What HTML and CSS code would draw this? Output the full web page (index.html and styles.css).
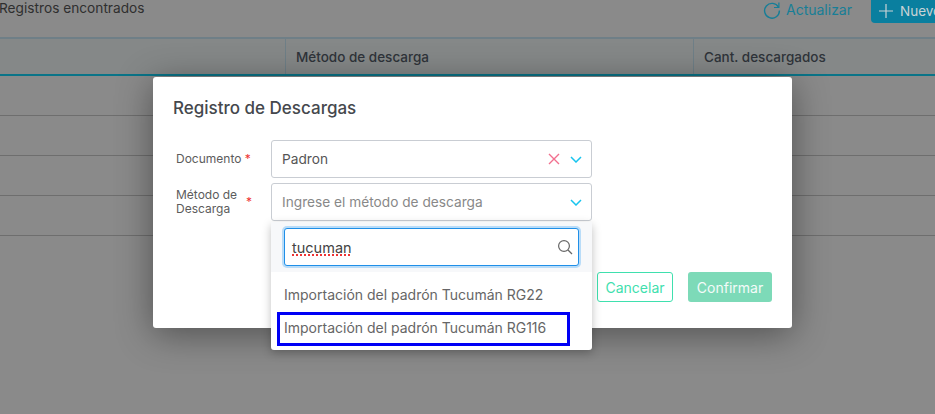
FILE: index.html
```html
<!DOCTYPE html>
<html lang="es">
<head>
<meta charset="utf-8">
<title>Registro de Descargas</title>
<link rel="stylesheet" href="styles.css">
</head>
<body>
<div class="page">
  <div class="toolbar">
    <span class="found">Registros encontrados</span>
    <div class="actions">
      <span class="refresh">
        <svg width="18" height="18" viewBox="0 0 18 18" fill="none" stroke="#177e97" stroke-width="1.4"><path d="M15.5 6.2A7.4 7.4 0 1 0 16.4 9.6"/><path d="M15.9 1.6v4.9h-4.9" stroke-width="1.2"/></svg>
        Actualizar
      </span>
      <span class="new">
        <svg width="14" height="14" viewBox="0 0 14 14" stroke="#c9d3d6" stroke-width="1.2"><path d="M7 0v14M0 7h14"/></svg>
        Nuevo
      </span>
    </div>
  </div>
  <div class="thead">
    <div class="th c1"></div>
    <div class="th c2">Método de descarga</div>
    <div class="th c3">Cant. descargados</div>
  </div>
  <div class="row"></div>
  <div class="row"></div>
  <div class="row"></div>
  <div class="row"></div>
</div>

<div class="modal">
  <h2 class="title">Registro de Descargas</h2>
  <div class="field">
    <label class="lab">Documento <i>*</i></label>
    <div class="select">
      <span class="value">Padron</span>
      <svg class="x" width="12" height="12" viewBox="0 0 12 12" stroke="#f2708f" stroke-width="1.4"><path d="M1 1l10 10M11 1L1 11"/></svg>
      <svg class="chev" width="12" height="7" viewBox="0 0 12 7" fill="none" stroke="#18c4ee" stroke-width="1.5"><path d="M1 1l5 5 5-5"/></svg>
    </div>
  </div>
  <div class="field">
    <label class="lab two">Método de Descarga <i>*</i></label>
    <div class="select">
      <span class="value ph">Ingrese el método de descarga</span>
      <svg class="chev" width="12" height="7" viewBox="0 0 12 7" fill="none" stroke="#18c4ee" stroke-width="1.5"><path d="M1 1l5 5 5-5"/></svg>
    </div>
  </div>
  <div class="buttons">
    <span class="btn cancel">Cancelar</span>
    <span class="btn confirm">Confirmar</span>
  </div>
</div>

<div class="dropdown">
  <div class="searchwrap">
    <div class="search">
      <span class="typed">tucuman</span>
      <svg width="16" height="16" viewBox="0 0 16 16" fill="none" stroke="#666" stroke-width="1.2"><circle cx="7" cy="7" r="5.4"/><path d="M11 11l4 4"/></svg>
    </div>
  </div>
  <div class="opts">
    <div class="opt">Importación del padrón Tucumán RG22</div>
    <div class="opt">Importación del padrón Tucumán RG116</div>
  </div>
</div>
<div class="highlight"></div>
</body>
</html>
```
FILE: styles.css
```css
* { box-sizing: border-box; }
html, body { margin: 0; height: 100%; overflow: hidden; }
body { background: #8a8a8a; font-family: Inter, "Liberation Sans", sans-serif; color: #333; width: 935px; height: 414px; position: relative; }
.page { width: 935px; }
.toolbar { height: 37px; display: flex; justify-content: space-between; align-items: flex-start; }
.found { font-size: 13.7px; color: #2f2f2f; margin-left: -1px; line-height: 17px; }
.actions { display: flex; gap: 19px; margin-right: -28px; }
.refresh { display: flex; align-items: center; gap: 5px; font-size: 14px; color: #177e97; height: 19px; }
.new { display: flex; align-items: center; gap: 7px; width: 92px; height: 24px; margin-top: -1px; padding-left: 8px; background: #0a7f9f; border-radius: 0 0 0 4px; color: #c9d3d6; font-size: 13.5px; }
.thead { display: flex; height: 39px; border-top: 2px solid #6f7f87; border-bottom: 2px solid #0a7488; background: #858888; }
.th { height: 100%; font-size: 13.5px; color: #2f343a; padding: 0 10px; display: flex; align-items: center; font-weight: 500; }
.c1 { width: 285px; }
.c2 { width: 408px; border-left: 1px solid #6f7f87; }
.c3 { flex: 1; border-left: 1px solid #6f7f87; }
.row { height: 40px; border-bottom: 1px solid #6e6e6e; }
.modal { position: absolute; left: 153px; top: 77px; width: 639px; height: 251px; background: #fff; border-radius: 3px; box-shadow: 0 6px 36px rgba(0,0,0,.42); padding: 21px 20px 0; }
.title { margin: 0 0 22px; font-size: 17px; font-weight: 450; color: #45484d; line-height: 20px; }
.field { display: flex; align-items: center; margin-bottom: 5px; }
.lab { width: 98px; padding-left: 3px; font-size: 12px; line-height: 14px; color: #5c5c5c; }
.lab.two { padding-right: 26px; position: relative; }
.lab.two i { position: absolute; left: 73px; top: 7px; }
.lab i { color: #e33; font-style: normal; }
.select { width: 321px; height: 38px; border: 1px solid #c9cdd3; border-radius: 3px; display: flex; align-items: center; padding: 0 9px 0 10px; }
.value { flex: 1; font-size: 13.7px; color: #555; }
.value.ph { color: #888; }
.x { margin-right: 10px; }
.buttons { position: absolute; right: 20px; top: 195px; display: flex; gap: 15px; }
.btn { display: flex; align-items: center; justify-content: center; height: 30px; border-radius: 3px; font-size: 14px; }
.cancel { width: 76px; border: 1px solid #3fe0ae; color: #3fe0ae; }
.confirm { width: 84px; background: #7ddab8; color: #f4fbf8; }
.dropdown { position: absolute; left: 271px; top: 222px; width: 321px; height: 128px; background: #fff; border-radius: 3px; box-shadow: 0 3px 10px rgba(0,0,0,.25); }
.searchwrap { background: #f7f8fa; height: 50px; padding: 6px 13px 0; }
.search { height: 38px; border: 1.5px solid #1f8fe8; border-radius: 3px; box-shadow: 0 0 0 2px #b9dcf8; background: #fff; display: flex; align-items: center; justify-content: space-between; padding: 0 5px 0 7px; }
.typed { font-size: 14.5px; color: #444; text-decoration: underline dotted #e33 1.5px; text-underline-offset: 2px; }
.opts { padding-top: 6px; }
.opt { height: 33px; padding: 0 13px; display: flex; align-items: center; font-size: 14px; color: #666; }
.highlight { position: absolute; left: 277px; top: 312px; width: 293px; height: 34px; border: 3px solid #0000f5; }
```
